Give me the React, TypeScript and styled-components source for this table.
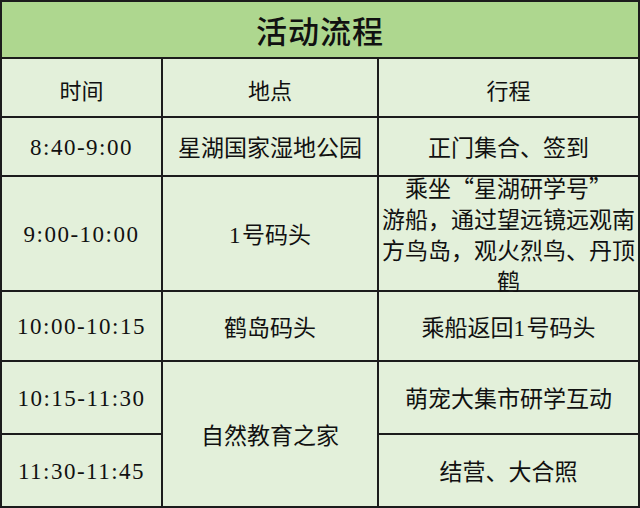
import React from 'react';
import styled, { createGlobalStyle } from 'styled-components';

const GlobalStyle = createGlobalStyle`
  html, body {
    margin: 0;
    padding: 0;
    background: #ffffff;
  }
`;

// Table drawn as a grid: the dark background shows through the 2px gaps as rules
const Table = styled.div`
  width: 640px;
  height: 508px;
  box-sizing: border-box;
  padding: 2px;
  background: #1c1c1c;
  display: grid;
  grid-template-columns: 159px 214px 259px;
  grid-template-rows: 55px 57px 57px 113px 68px 71px 71px;
  gap: 2px;
  font-family: "Liberation Serif", "Noto Sans CJK SC", serif;
  color: #111;
`;

const Title = styled.div`
  grid-column: 1 / -1;
  background: #aed78f;
  display: flex;
  align-items: center;
  justify-content: center;
  font-family: "Noto Sans CJK SC", sans-serif;
  font-size: 31px;
  font-weight: 500;
  letter-spacing: 1px;
`;

const Cell = styled.div<{ $rows?: number }>`
  grid-row: ${props => (props.$rows ? `span ${props.$rows}` : 'auto')};
  background: #e3f0da;
  display: flex;
  align-items: center;
  justify-content: center;
  text-align: center;
  white-space: pre-line;
  font-size: 23px;
  line-height: 28px;
  letter-spacing: 1.5px;
  padding-top: 2px;
`;

const HeadCell = styled(Cell)`
  font-family: "Noto Sans CJK SC", sans-serif;
  font-size: 22px;
  letter-spacing: 0;
`;

const Text = styled.span`
  font-family: "Noto Sans CJK SC", sans-serif;
  font-size: 23px;
  letter-spacing: 0;
`;

type Row = { time: string; place?: string; placeRows?: number; plan: string };

const rows: Row[] = [
  { time: '8:40-9:00', place: '星湖国家湿地公园', plan: '正门集合、签到' },
  {
    time: '9:00-10:00',
    place: '1号码头',
    plan: '乘坐“星湖研学号”\n游船，通过望远镜远观南\n方鸟岛，观火烈鸟、丹顶\n鹤',
  },
  { time: '10:00-10:15', place: '鹤岛码头', plan: '乘船返回1号码头' },
  { time: '10:15-11:30', place: '自然教育之家', placeRows: 2, plan: '萌宠大集市研学互动' },
  { time: '11:30-11:45', plan: '结营、大合照' },
];

// Digits keep the serif face, CJK runs switch to the sans CJK face
const Mixed: React.FC<{ text: string }> = ({ text }) => {
  const parts = text.split(/([0-9:\-]+)/).filter(Boolean);
  return (
    <>
      {parts.map((p, i) =>
        /^[0-9:\-]+$/.test(p) ? <span key={i}>{p}</span> : <Text key={i}>{p}</Text>
      )}
    </>
  );
};

const App: React.FC = () => {
  return (
    <>
      <GlobalStyle />
      <Table>
        <Title>活动流程</Title>
        <HeadCell>时间</HeadCell>
        <HeadCell>地点</HeadCell>
        <HeadCell>行程</HeadCell>
        {rows.map(row => (
          <React.Fragment key={row.time}>
            <Cell>{row.time}</Cell>
            {row.place && (
              <Cell $rows={row.placeRows}>
                <div><Mixed text={row.place} /></div>
              </Cell>
            )}
            <Cell>
              <div><Mixed text={row.plan} /></div>
            </Cell>
          </React.Fragment>
        ))}
      </Table>
    </>
  );
};

export default App;
